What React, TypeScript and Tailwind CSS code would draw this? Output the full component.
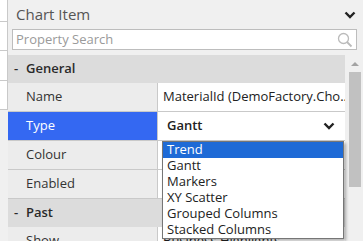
import React from 'react';

const font = { fontFamily: '"Open Sans", "Noto Sans", sans-serif' };

const Chevron = ({ className = '' }: { className?: string }) => (
  <svg width="12" height="8" viewBox="0 0 12 8" className={className}>
    <path d="M1.5 1.5 L6 6 L10.5 1.5" fill="none" stroke="#222" strokeWidth="2.4" />
  </svg>
);

const SearchIcon = () => (
  <svg width="16" height="16" viewBox="0 0 16 16">
    <circle cx="6.5" cy="6.5" r="5" fill="none" stroke="#bbb" strokeWidth="1.3" />
    <path d="M10 10 L14.5 14.5" stroke="#bbb" strokeWidth="1.8" />
  </svg>
);

const Section = ({ title }: { title: string }) => (
  <div className="h-[28px] shrink-0 flex items-center bg-[#dcdcdc] text-[13px] font-semibold text-[#2a2a2a]">
    <span className="w-[18px] pl-[6px]">-</span>
    <span>{title}</span>
  </div>
);

interface RowProps {
  label: string;
  value?: React.ReactNode;
  selected?: boolean;
}

const Row = ({ label, value, selected }: RowProps) => (
  <div className="h-[29px] shrink-0 flex border-b border-[#c9c9c9]">
    <div
      className={`w-[150px] shrink-0 flex items-center pl-[18px] text-[13px] border-r border-[#c9c9c9] ${
        selected ? 'bg-[#3468f2] text-white' : 'bg-[#ececec] text-[#333]'
      }`}
    >
      {label}
    </div>
    <div className="flex-1 min-w-0 bg-white flex items-center pl-[5px] text-[13px] text-[#222] whitespace-nowrap overflow-hidden">
      {value}
    </div>
  </div>
);

const options = ['Trend', 'Gantt', 'Markers', 'XY Scatter', 'Grouped Columns', 'Stacked Columns'];

export default function App() {
  return (
    <div className="w-[363px] h-[241px] overflow-hidden flex bg-[#f0f0f0]" style={font}>
      {/* panel behind, on the left */}
      <div className="w-[8px] shrink-0 flex flex-col">
        <div className="bg-white border-r border-[#c9c9c9] flex flex-col">
          <div className="h-[22px] border-b border-[#c9c9c9]" />
          <div className="h-[29px] border-b border-[#c9c9c9]" />
          <div className="h-[30px] border-b border-[#c9c9c9]" />
          <div className="h-[29px] border-b border-[#c9c9c9]" />
        </div>
      </div>

      <div className="flex-1 flex flex-col relative">
        <div className="h-[29px] shrink-0 flex items-center justify-between pl-[8px] pr-[7px]">
          <span className="text-[15px] text-[#555]">Chart Item</span>
          <Chevron />
        </div>

        <div className="ml-[4px] mr-[6px] h-[21px] shrink-0 bg-white border border-[#bdbdbd] flex items-center justify-between pl-[3px] pr-[3px]">
          <span className="text-[13px] text-[#9a9a9a]">Property Search</span>
          <SearchIcon />
        </div>

        <div className="mt-[5px] flex flex-1 min-h-0">
          <div className="w-[337px] shrink-0 flex flex-col">
            <Section title="General" />
            <Row label="Name" value="MaterialId (DemoFactory.Cho..." />
            <Row
              label="Type"
              selected
              value={
                <div className="w-full flex items-center justify-between pl-[4px] pr-[10px]">
                  <span className="font-semibold">Gantt</span>
                  <Chevron />
                </div>
              }
            />
            <Row label="Colour" />
            <Row label="Enabled" />
            <Section title="Past" />
            <Row label="Show" value="Business Highlights" />
          </div>
          <div className="ml-[2px] flex-1 bg-[#f0f0f0] flex flex-col items-center">
            <svg width="10" height="6" viewBox="0 0 10 6" className="mt-[6px]">
              <path d="M1 5 L5 1 L9 5 Z" fill="#a3a3a3" />
            </svg>
            <div className="mt-[5px] w-[12px] h-[115px] bg-[#c1c1c1]" />
          </div>
        </div>

        {/* open select list */}
        <div className="absolute left-[154px] top-[141px] w-[182px] bg-white border border-[#767676] shadow-[2px_2px_3px_rgba(0,0,0,0.3)]">
          {options.map((o, i) => (
            <div
              key={o}
              className={`h-[16px] flex items-center pl-[4px] text-[13px] ${
                i === 0 ? 'bg-[#1e6ad6] text-white' : 'text-[#222]'
              }`}
            >
              {o}
            </div>
          ))}
        </div>
      </div>
    </div>
  );
}
